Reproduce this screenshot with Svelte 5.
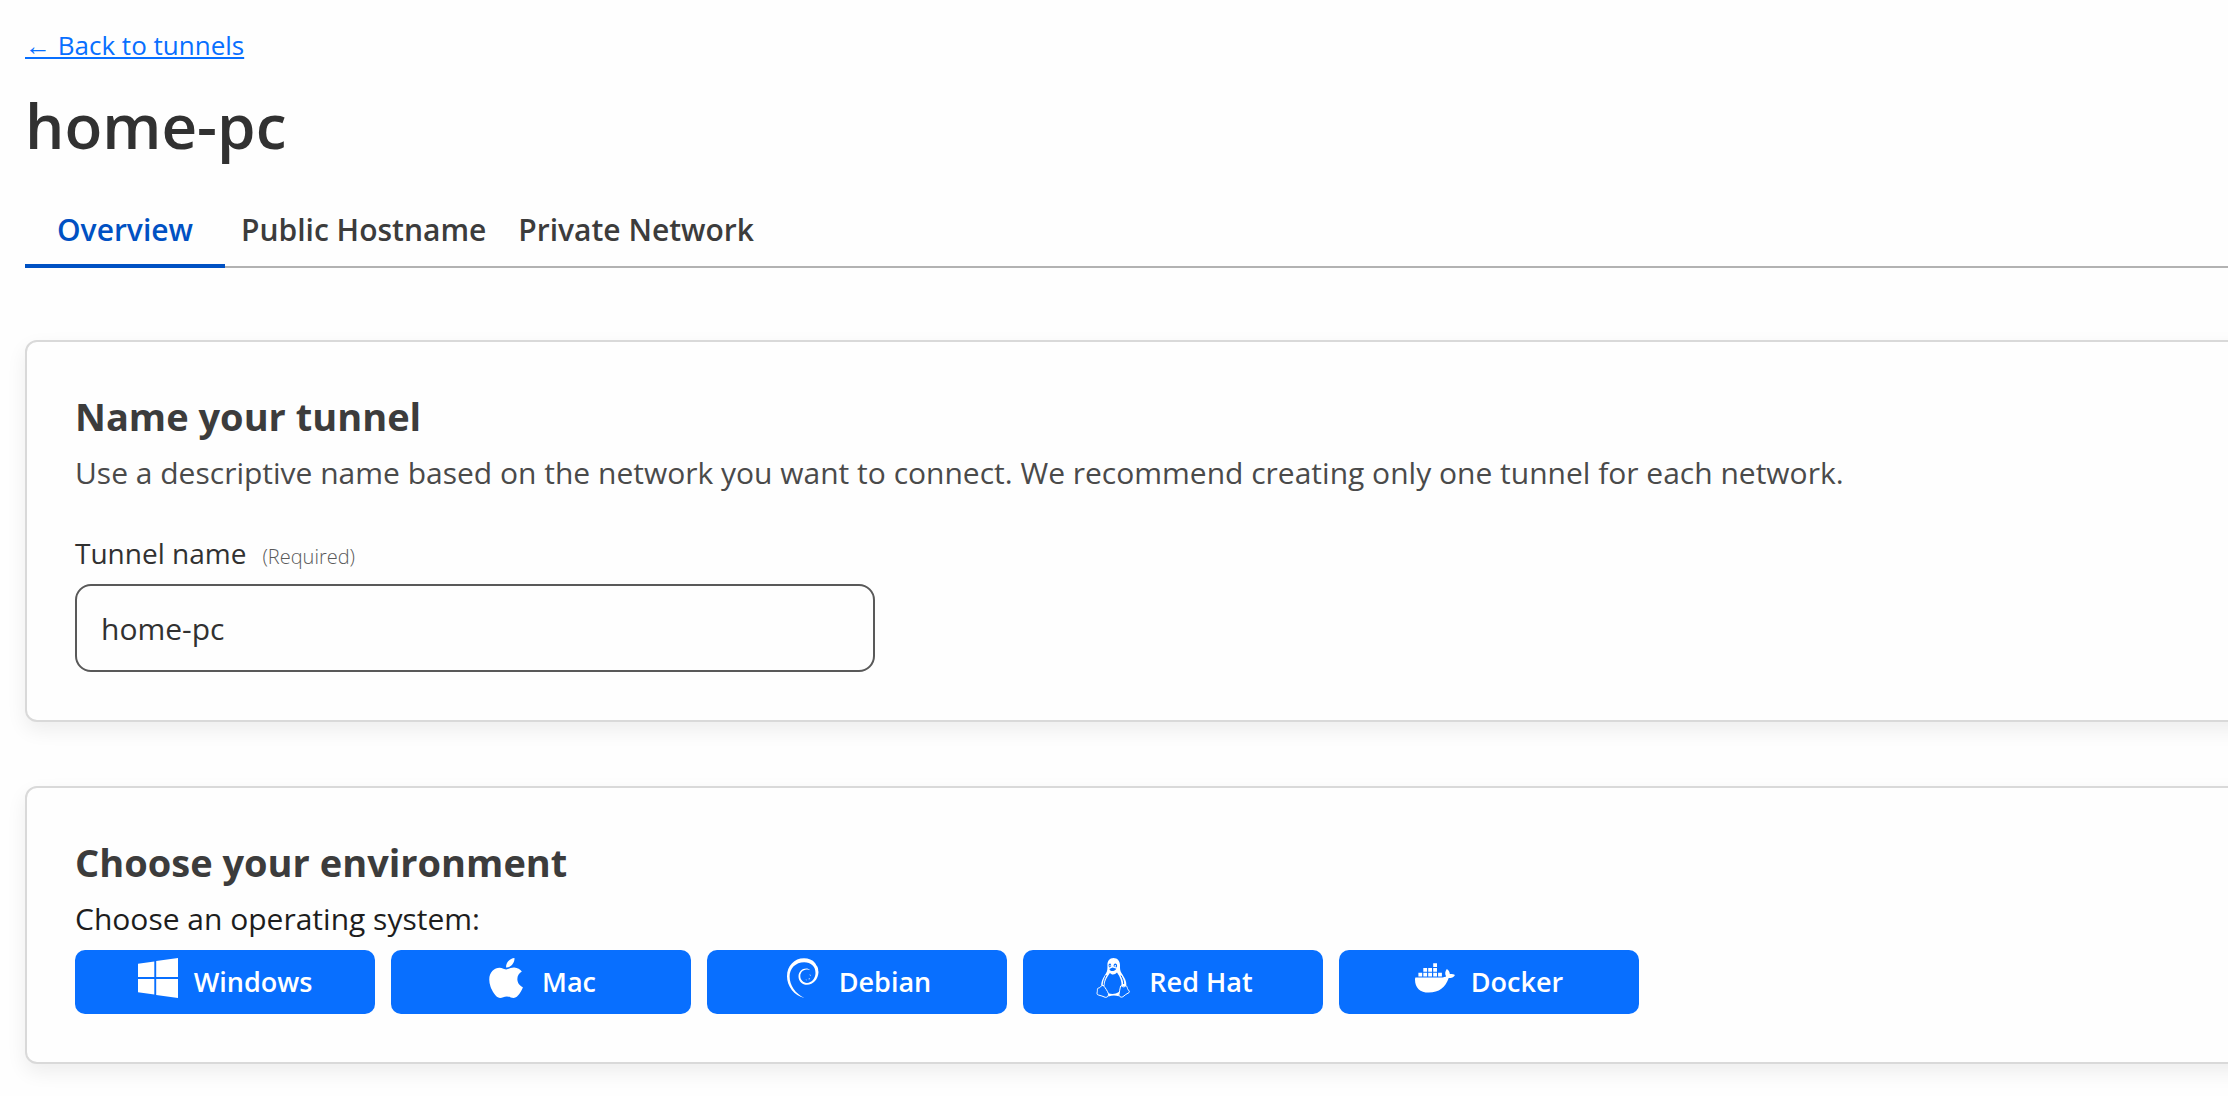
<script>
  const tabs = ['Overview', 'Public Hostname', 'Private Network'];
  const systems = ['Windows', 'Mac', 'Debian', 'Red Hat', 'Docker'];
  let active = $state('Overview');
  let name = $state('home-pc');
</script>

{#snippet icon(system)}
  <svg class="icon" viewBox="0 0 40 40" aria-hidden="true">
    {#if system === 'Windows'}
      <path d="M0 5.7 16.3 3.4V19.1H0zM18.2 3.1 40 0V19.1H18.2zM0 20.9H16.3V36.6L0 34.3zM18.2 20.9H40V40L18.2 36.9z" />
    {:else if system === 'Mac'}
      <g transform="translate(2.9 -2.86) scale(.0893)">
        <path d="M318.7 268.7c-.2-36.7 16.4-64.4 50-84.8-18.8-26.9-47.2-41.7-84.7-44.6-35.5-2.8-74.3 20.7-88.5 20.7-15 0-49.4-19.7-76.4-19.7C63.3 141.2 4 184.8 4 273.5q0 39.3 14.4 81.2c12.8 36.7 59 126.7 107.2 125.2 25.2-.6 43-17.9 75.8-17.9 31.8 0 48.3 17.9 76.4 17.9 48.6-.7 90.4-82.5 102.6-119.3-65.2-30.7-61.7-90-61.7-91.9zm-56.6-164.2c27.3-32.4 24.8-61.9 24-72.5-24.1 1.4-52 16.4-67.9 34.9-17.5 19.8-27.8 44.3-25.6 71.9 26.1 2 49.9-11.4 69.500-34.300z" />
      </g>
    {:else if system === 'Debian'}
      <path d="M21.500 40C11 37.700 4 28 4 18.200 4 8 11.300.3 21 .3c4.500 0 8.500 1.600 11 4.600 1.200 1.300 1 2.200 2 3.200 1 1.500 1.300 3 1.200 4.600l.3 1.200C35.200 21 30.400 26.700 24 26.700c-4.700 0-8.500-3.600-8.500-8.300 0-4.400 3.400-7.900 7.700-7.900 1.600 0 3 .6 4 1.800-1.200-.7-2.300-1-3.700-.8-3.600.2-6.200 3.200-6.200 6.600 0 3.900 2.900 6.800 6.600 6.800 4.800 0 8.500-4.600 8.600-9.900C32.600 8.500 28 4.200 21.200 4.200 12.600 4.200 6.600 10.400 6.600 18.600c0 8.700 5.800 17.400 14.900 21.400z" />
      <path d="M26.500 16.200l1.200.8-.5 1.200zM25.200 21l1.800-.9-.6 1.500zM22.600 21.500l1.200.2-.5.900z" />
    {:else if system === 'Red Hat'}
      <path fill-rule="evenodd" d="M20.400 0c4 0 6.500 2.800 6.600 7 0 3.200-.2 5.400 1.600 8.200 2.800 4.200 5.400 8.400 4.600 13l-4.800.3c.6-4.600-1-9-4.400-13.900-1.200 1.200-2.500 1.900-4 1.900-1.300 0-2.300-.6-3.100-1.500C13.800 19.500 11.500 23 11.400 28l-3.200-.4c0-5 2.500-8.600 4.700-12.200 1.700-2.700 1.600-5.200 1.500-8.400C14.400 3 16.600 0 20.400 0zM17 5.600c-.9 0-1.400.9-1.400 2 0 .8.300 1.500.8 1.800l1.700-.8c.2-1.600-.2-3-1.100-3zm5.400-.1c-1.200 0-1.900 1.200-1.800 2.800l2.800 1.200c.5-.5.7-1.200.7-1.800 0-1.200-.7-2.200-1.700-2.200zM16.400 10.900c.4 1.300 1.400 2.200 2.800 2.200 1.600 0 3.200-.9 4.200-2.400l-3.900-1.300z" />
      <circle cx="17" cy="7.800" r=".7" />
      <circle cx="22.300" cy="7.900" r=".8" />
      <path class="crease" d="M13.200 17C12 20 10.200 23 10.200 27M28 17.500C29.500 20.500 31 23.500 30.600 26" />
      <path class="line" d="M9.200 27.500C8 27.700 7.500 29.800 5.500 30 4 30.200 4.600 32 4.300 33.600 4 35.400 3.600 36.600 5.400 37 8 37.300 10 38.600 12.200 39.300 14.600 39.700 16 37.600 15.400 35.600 14.400 33 12.400 30 11 28.200 10.400 27.500 9.800 27.300 9.200 27.500zM27.600 28C26.700 30.500 26.600 34 26 36.600 26 38.600 27.800 39.800 29.800 38.800 31.800 37 33.700 35.800 36 34.600 37.400 33.600 35 32.200 34.500 30.500 34.100 28.900 33.700 27.900 32.800 27.600 31.500 29.400 29.500 29.200 28.300 27.600z" />
      <path d="M15.300 35.200c3.600 1.300 7.300 1 10.800-1.500l-.3 4.500c-3.300-.9-6.900-.9-10.300.2z" />
    {:else}
      <path d="M18.200 5.200H22V9h-3.800zM8.300 10h3.800v3.700H8.300zM13.200 10H17v3.700h-3.800zM18.200 10H22v3.700h-3.800zM3.400 14.800h3.800v3.700H3.400zM8.300 14.800h3.800v3.700H8.300zM13.200 14.800H17v3.700h-3.800zM18.200 14.800H22v3.700h-3.800zM23.100 14.800h3.800v3.700h-3.800z" />
      <path d="M.4 19.400h27.200c1.300 0 2.600-.3 3.600-.8-1.500-2.300-1.300-5.200.6-7.600 2 1.300 2.900 2.900 3 5.100 1.800-.4 3.800-.1 5.200.8-1.200 2.300-3.500 3.200-6.300 3.200C30.500 29.500 24 34.600 13.800 34.600 5 34.600 0 29.600 0 21.400c0-.7.100-1.400.4-2z" />
    {/if}
  </svg>
{/snippet}

<main>
  <a class="back" href="#tunnels">← Back to tunnels</a>
  <h1>home-pc</h1>
  <div class="tabs" role="tablist">
    {#each tabs as tab}
      <button role="tab" aria-selected={active === tab} class:active={active === tab} onclick={() => (active = tab)}>{tab}</button>
    {/each}
  </div>

  <section>
    <h2>Name your tunnel</h2>
    <p class="description">Use a descriptive name based on the network you want to connect. We recommend creating only one tunnel for each network.</p>
    <label for="tunnel-name">Tunnel name <small>(Required)</small></label>
    <input id="tunnel-name" type="text" bind:value={name} />
  </section>

  <section>
    <h2>Choose your environment</h2>
    <p>Choose an operating system:</p>
    <div class="systems">
      {#each systems as system}
        <button>{@render icon(system)}<span>{system}</span></button>
      {/each}
    </div>
  </section>
</main>

<style>
  :global(body) {
    margin: 0;
    background: #fefefe;
  }
  main {
    display: flex;
    flex-direction: column;
    padding: 25px 0 32px 25px;
    font-family: 'Open Sans', 'Noto Sans', sans-serif;
    font-size: 30px;
    line-height: 48px;
    color: #1d1d1d;
    overflow: hidden;
  }
  h1, h2, p {
    margin: 0;
  }
  button, input {
    font: inherit;
  }
  .back {
    align-self: flex-start;
    font-size: 26px;
    line-height: 40px;
    color: #086fff;
    text-decoration-thickness: 2px;
    text-underline-offset: 2px;
  }
  h1 {
    margin-top: 20px;
    font-size: 62px;
    line-height: 80px;
    font-weight: 600;
    color: #313131;
  }
  .tabs {
    display: flex;
    margin-top: 41px;
    box-shadow: inset 0 -2px #b2b2b2;
  }
  .tabs button {
    padding: 0 16px 10px;
    border: 0;
    border-bottom: 4px solid transparent;
    background: none;
    font-weight: 600;
    color: #3c3c3c;
    cursor: pointer;
  }
  .tabs .active {
    padding: 0 32px 10px;
    border-color: #0051c3;
    color: #0051c3;
  }
  section {
    margin-top: 64px;
    margin-right: -48px;
    padding: 48px 96px 48px 48px;
    border: 2px solid #d9d9d9;
    border-radius: 12px;
    background: #fefefe;
    box-shadow: 0 8px 20px rgba(0, 0, 0, 0.07);
  }
  .tabs + section {
    margin-top: 72px;
  }
  h2 {
    margin-bottom: 7px;
    font-size: 38px;
    line-height: 52px;
    font-weight: 700;
    color: #3c3c3c;
  }
  .description {
    color: #4a4a4a;
  }
  label {
    display: flex;
    align-items: baseline;
    gap: 16px;
    margin-top: 32px;
    font-size: 28px;
    color: #313131;
  }
  small {
    font-size: 20px;
    line-height: 24px;
    font-weight: 300;
    color: #595959;
  }
  input {
    display: block;
    box-sizing: border-box;
    width: 100%;
    max-width: 800px;
    height: 88px;
    margin-top: 7px;
    padding: 0 24px;
    border: 2px solid #595959;
    border-radius: 16px;
    background: #fefefe;
    color: #313131;
  }
  .systems {
    display: flex;
    flex-wrap: wrap;
    gap: 16px;
    margin-top: 7px;
  }
  .systems button {
    display: flex;
    justify-content: center;
    gap: 16px;
    width: 300px;
    padding: 8px 0;
    border: 0;
    border-radius: 10px;
    background: #086fff;
    color: #fff;
    font-size: 27px;
    font-weight: 600;
    line-height: 48px;
    cursor: pointer;
  }
  .icon {
    width: 40px;
    height: 40px;
    fill: currentColor;
  }
  .line, .crease {
    fill: none;
    stroke: currentColor;
    stroke-width: 1;
    stroke-linejoin: round;
  }
  .crease {
    stroke: #086fff;
  }
</style>
